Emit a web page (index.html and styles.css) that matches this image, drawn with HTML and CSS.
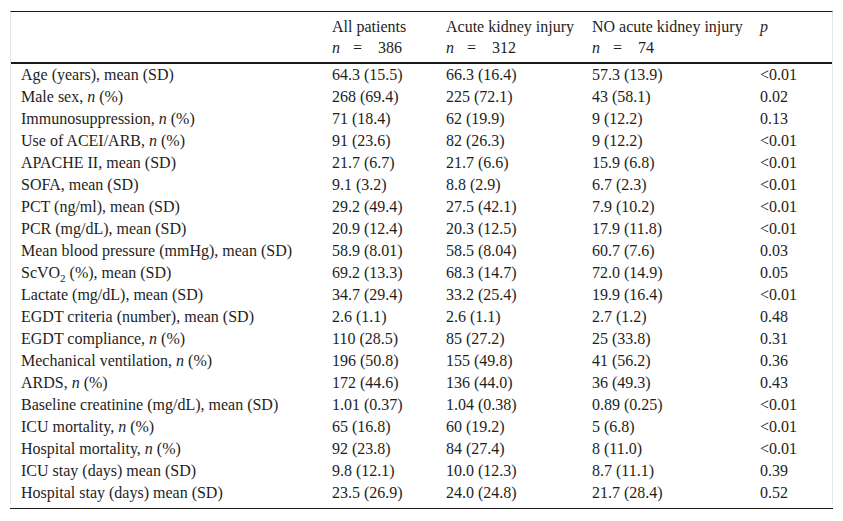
FILE: index.html
```html
<!DOCTYPE html>
<html>
<head>
<meta charset="utf-8">
<link rel="stylesheet" href="styles.css">
</head>
<body>
<div class="frame">
  <div class="box">
    <table class="data">
      <colgroup>
        <col class="c1"><col class="c2"><col class="c3"><col class="c4"><col class="c5">
      </colgroup>
      <thead>
        <tr>
          <th></th>
          <th>All patients<br><span class="nn"><i>n</i><span class="eq">=</span>386</span></th>
          <th>Acute kidney injury<br><span class="nn"><i>n</i><span class="eq">=</span>312</span></th>
          <th>NO acute kidney injury<br><span class="nn"><i>n</i><span class="eq">=</span>74</span></th>
          <th><i>p</i><br>&nbsp;</th>
        </tr>
      </thead>
      <tbody>
        <tr><td>Age (years), mean (SD)</td><td>64.3 (15.5)</td><td>66.3 (16.4)</td><td>57.3 (13.9)</td><td>&lt;0.01</td></tr>
        <tr><td>Male sex, <i>n</i> (%)</td><td>268 (69.4)</td><td>225 (72.1)</td><td>43 (58.1)</td><td>0.02</td></tr>
        <tr><td>Immunosuppression, <i>n</i> (%)</td><td>71 (18.4)</td><td>62 (19.9)</td><td>9 (12.2)</td><td>0.13</td></tr>
        <tr><td>Use of ACEI/ARB, <i>n</i> (%)</td><td>91 (23.6)</td><td>82 (26.3)</td><td>9 (12.2)</td><td>&lt;0.01</td></tr>
        <tr><td>APACHE II, mean (SD)</td><td>21.7 (6.7)</td><td>21.7 (6.6)</td><td>15.9 (6.8)</td><td>&lt;0.01</td></tr>
        <tr><td>SOFA, mean (SD)</td><td>9.1 (3.2)</td><td>8.8 (2.9)</td><td>6.7 (2.3)</td><td>&lt;0.01</td></tr>
        <tr><td>PCT (ng/ml), mean (SD)</td><td>29.2 (49.4)</td><td>27.5 (42.1)</td><td>7.9 (10.2)</td><td>&lt;0.01</td></tr>
        <tr><td>PCR (mg/dL), mean (SD)</td><td>20.9 (12.4)</td><td>20.3 (12.5)</td><td>17.9 (11.8)</td><td>&lt;0.01</td></tr>
        <tr><td>Mean blood pressure (mmHg), mean (SD)</td><td>58.9 (8.01)</td><td>58.5 (8.04)</td><td>60.7 (7.6)</td><td>0.03</td></tr>
        <tr><td>ScVO<sub>2</sub> (%), mean (SD)</td><td>69.2 (13.3)</td><td>68.3 (14.7)</td><td>72.0 (14.9)</td><td>0.05</td></tr>
        <tr><td>Lactate (mg/dL), mean (SD)</td><td>34.7 (29.4)</td><td>33.2 (25.4)</td><td>19.9 (16.4)</td><td>&lt;0.01</td></tr>
        <tr><td>EGDT criteria (number), mean (SD)</td><td>2.6 (1.1)</td><td>2.6 (1.1)</td><td>2.7 (1.2)</td><td>0.48</td></tr>
        <tr><td>EGDT compliance, <i>n</i> (%)</td><td>110 (28.5)</td><td>85 (27.2)</td><td>25 (33.8)</td><td>0.31</td></tr>
        <tr><td>Mechanical ventilation, <i>n</i> (%)</td><td>196 (50.8)</td><td>155 (49.8)</td><td>41 (56.2)</td><td>0.36</td></tr>
        <tr><td>ARDS, <i>n</i> (%)</td><td>172 (44.6)</td><td>136 (44.0)</td><td>36 (49.3)</td><td>0.43</td></tr>
        <tr><td>Baseline creatinine (mg/dL), mean (SD)</td><td>1.01 (0.37)</td><td>1.04 (0.38)</td><td>0.89 (0.25)</td><td>&lt;0.01</td></tr>
        <tr><td>ICU mortality, <i>n</i> (%)</td><td>65 (16.8)</td><td>60 (19.2)</td><td>5 (6.8)</td><td>&lt;0.01</td></tr>
        <tr><td>Hospital mortality, <i>n</i> (%)</td><td>92 (23.8)</td><td>84 (27.4)</td><td>8 (11.0)</td><td>&lt;0.01</td></tr>
        <tr><td>ICU stay (days) mean (SD)</td><td>9.8 (12.1)</td><td>10.0 (12.3)</td><td>8.7 (11.1)</td><td>0.39</td></tr>
        <tr><td>Hospital stay (days) mean (SD)</td><td>23.5 (26.9)</td><td>24.0 (24.8)</td><td>21.7 (28.4)</td><td>0.52</td></tr>
      </tbody>
    </table>
  </div>
  <div class="bottom-rule"></div>
</div>
</body>
</html>
```

FILE: styles.css
```css
html, body {
  margin: 0;
  padding: 0;
  background: #ffffff;
}
body {
  font-family: "Liberation Serif", "Times New Roman", serif;
  font-size: 16px;
  color: #1e1e1e;
}
.frame {
  margin: 11px 0 0 10px;
  width: 823px;
}
.box {
  border-top: 1px solid #1a1a1a;
  border-left: 1px solid #e4e4e4;
  border-right: 1px solid #e4e4e4;
}
.data {
  border-collapse: collapse;
  table-layout: fixed;
  width: 821px;
}
.c1 { width: 311px; }
.c2 { width: 114px; }
.c3 { width: 146px; }
.c4 { width: 168px; }
.c5 { width: 82px; }
.data th {
  font-weight: normal;
  text-align: left;
  vertical-align: top;
  padding: 4px 0 4px 10px;
  line-height: 21px;
  white-space: nowrap;
}
.data thead tr {
  border-bottom: 2px solid #1a1a1a;
}
.data td {
  padding: 0 0 0 10px;
  height: 22px;
  line-height: 22px;
  white-space: nowrap;
}
.nn .eq {
  display: inline-block;
  padding: 0 16px 0 13px;
}
sub {
  font-size: 11px;
  line-height: 0;
  vertical-align: -4px;
}
.bottom-rule {
  margin-top: 4px;
  height: 1px;
  background: #1a1a1a;
}
```
